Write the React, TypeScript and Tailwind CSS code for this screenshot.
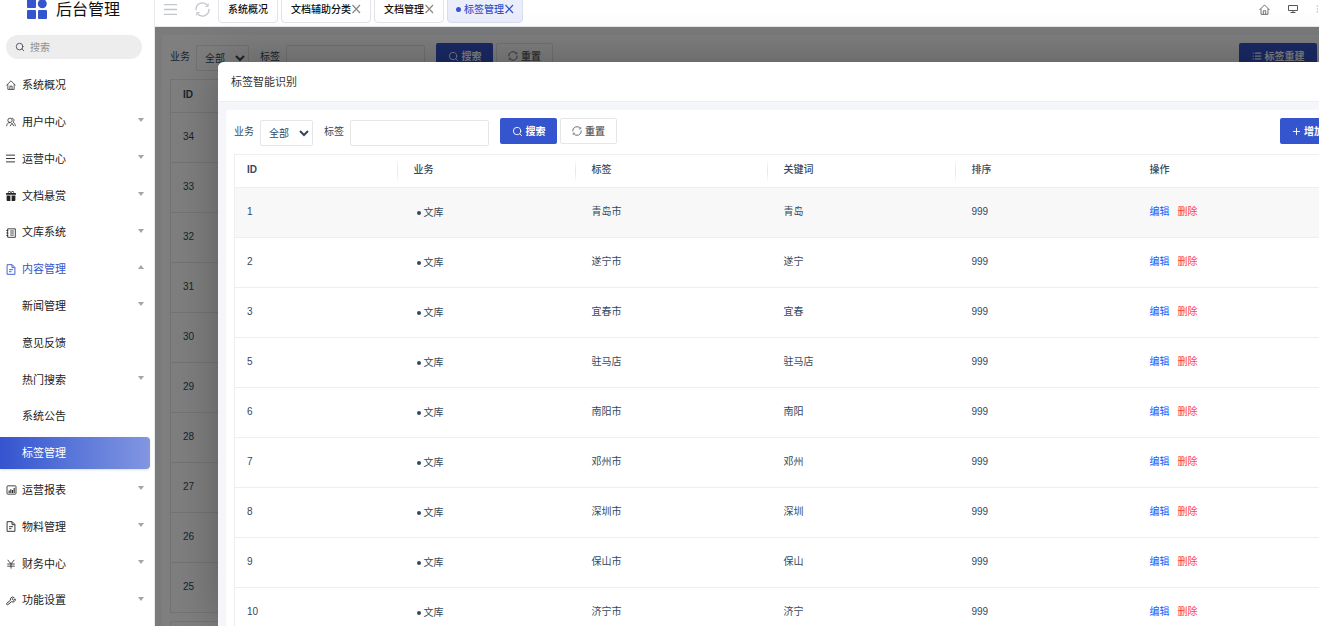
import React, { useState } from 'react';
import { BsGiftFill } from 'react-icons/bs';
import { Plus, Search, Wrench, List } from 'lucide-react';

interface MenuItem {
  label: string;
  icon?: React.ReactNode;
  arrow?: 'up' | 'down';
  highlight?: boolean;
}

interface TagRow {
  id: number;
  tag: string;
  keyword: string;
}

const HomeIcon: React.FC<{ size: number }> = ({ size }) => (
  <svg width={size} height={size} viewBox="0 0 12 12" fill="none" stroke="currentColor" strokeWidth="0.9">
    <path d="M0.5 6.5 6 1l5.5 5.5M2.2 5.2v6.1h7.6V5.2M4.7 11.3V7.4h2.6v3.9" />
  </svg>
);

const UserIcon = () => (
  <svg width="10" height="10" viewBox="0 0 12 12" fill="none" stroke="currentColor" strokeWidth="0.9">
    <circle cx="4.8" cy="4" r="2.6" />
    <path d="M0.8 11c0-2.6 1.7-4.4 4-4.4M7 1.5c2.6 0 3.4 3 1.4 4.5 1.6.8 2.6 2.5 2.8 5M5 11l2.2-3.6L9.3 11" />
  </svg>
);

const LinesIcon: React.FC<{ size: number }> = ({ size }) => (
  <svg width={size} height={size} viewBox="0 0 12 12" fill="none" stroke="currentColor" strokeWidth="1.2">
    <path d="M0 1.5h12M0 6h12M0 10.5h12" />
  </svg>
);

const NotebookIcon = () => (
  <svg width="10" height="10" viewBox="0 0 12 12" fill="none" stroke="currentColor">
    <path d="M2 1h9.2v10.2H2zM0.3 3h2.4M0.3 6h2.4M0.3 9h2.4M5 3.6h4.4M5 6h4.4M5 8.5h4.4" />
  </svg>
);

const FileIcon = () => (
  <svg width="10" height="11" viewBox="0 0 11 12" fill="none" stroke="currentColor">
    <path d="M1.2 0.7h5.6l3 3v7.6H1.2zM6.6 0.9V4h3M3.4 6.2h4.2M3.4 8.4h2.6" />
  </svg>
);

const ChartIcon = () => (
  <svg width="11" height="10" viewBox="0 0 12 12" fill="none" stroke="currentColor">
    <rect x="0.6" y="1" width="10.8" height="10" rx="1" />
    <path d="M3.2 9.5V6.5M5.2 9.5V5M7.2 9.5V6M9.2 9.5V3.5" strokeWidth="1.3" />
  </svg>
);

const YenIcon = () => (
  <svg width="10" height="10" viewBox="0 0 12 12" fill="none" stroke="currentColor">
    <path d="M2 1l4 4.8L10 1M6 5.8V11.5M1.5 6h9M1.5 8.6h9" />
  </svg>
);

const RefreshIcon: React.FC<{ size: number }> = ({ size }) => (
  <svg width={size} height={size} viewBox="0 0 14 14" fill="none" stroke="currentColor" strokeWidth="1.3">
    <path d="M1 7.6A6 6 0 0 1 11.8 3.4M13 6.4A6 6 0 0 1 2.2 10.6" />
    <path d="M12.3 1.2v2.9H9.6M1.7 12.8V9.9h2.7" strokeWidth="0.9" />
  </svg>
);

const ScreenIcon = () => (
  <svg width="10" height="10" viewBox="0 0 10 10" fill="none" stroke="currentColor">
    <path d="M0.5 1.5h9v5h-9zM5 6.5v2M2.5 8.5h5" />
  </svg>
);

const CloseIcon = () => (
  <svg width="10" height="10" viewBox="0 0 10 10" fill="none" stroke="currentColor" strokeWidth="1.2">
    <path d="M1.5 1l7.5 8M9 1L1.5 9" />
  </svg>
);

const menu: MenuItem[] = [
  { label: '系统概况', icon: <HomeIcon size={10} /> },
  { label: '用户中心', icon: <UserIcon />, arrow: 'down' },
  { label: '运营中心', icon: <LinesIcon size={9} />, arrow: 'down' },
  { label: '文档悬赏', icon: <BsGiftFill size={10} />, arrow: 'down' },
  { label: '文库系统', icon: <NotebookIcon />, arrow: 'down' },
  { label: '内容管理', icon: <FileIcon />, arrow: 'up', highlight: true },
  { label: '新闻管理', arrow: 'down' },
  { label: '意见反馈' },
  { label: '热门搜索', arrow: 'down' },
  { label: '系统公告' },
  { label: '标签管理' },
  { label: '运营报表', icon: <ChartIcon />, arrow: 'down' },
  { label: '物料管理', icon: <FileIcon />, arrow: 'down' },
  { label: '财务中心', icon: <YenIcon />, arrow: 'down' },
  { label: '功能设置', icon: <Wrench size={10} strokeWidth={2} className="rotate-6" />, arrow: 'down' },
];

const tabs = [
  { label: '系统概况', closable: false },
  { label: '文档辅助分类', closable: true },
  { label: '文档管理', closable: true },
  { label: '标签管理', closable: true },
];

const pageIds = [34, 33, 32, 31, 30, 29, 28, 27, 26, 25];

const rows: TagRow[] = [
  { id: 1, tag: '青岛市', keyword: '青岛' },
  { id: 2, tag: '遂宁市', keyword: '遂宁' },
  { id: 3, tag: '宜春市', keyword: '宜春' },
  { id: 5, tag: '驻马店', keyword: '驻马店' },
  { id: 6, tag: '南阳市', keyword: '南阳' },
  { id: 7, tag: '邓州市', keyword: '邓州' },
  { id: 8, tag: '深圳市', keyword: '深圳' },
  { id: 9, tag: '保山市', keyword: '保山' },
  { id: 10, tag: '济宁市', keyword: '济宁' },
];

const Caret: React.FC<{ dir: 'up' | 'down' }> = ({ dir }) => (
  <svg width="6" height="4" viewBox="0 0 6 4" className="mb-1 text-[#a3a5a8]" fill="currentColor">
    <path d={dir === 'down' ? 'M0 0h6L3 4z' : 'M0 4h6L3 0z'} />
  </svg>
);

const Sidebar = () => {
  const [active, setActive] = useState('标签管理');

  return (
    <aside className="flex w-[155px] shrink-0 flex-col border-r border-[#e8e8e8] bg-white">
      <div className="flex h-[27px] items-end gap-[9px] overflow-hidden pb-2 pl-[27px]">
        <svg width="20" height="20" viewBox="0 0 20 20" fill="#3455cd" className="shrink-0">
          <rect width="9" height="9" rx="1" />
          <circle cx="15.3" cy="4.7" r="4.5" />
          <rect y="11" width="9" height="9" rx="1" />
          <rect x="11" y="11" width="9" height="9" rx="1" />
        </svg>
        <span className="text-[16px] leading-[18px] text-[#111]">后台管理</span>
      </div>

      <label className="mt-2 mr-3 ml-[6px] flex h-6 items-center gap-[5px] rounded-full bg-[#ededed] pl-[9px] text-[#444]">
        <Search size={10} strokeWidth={2} className="shrink-0" />
        <input
          type="text"
          placeholder="搜索"
          aria-label="搜索"
          className="w-full min-w-0 bg-transparent text-[10px] outline-none placeholder:text-[#8f8f8f]"
        />
      </label>

      <nav className="mt-2 flex flex-1 flex-col pb-[7px]">
        {menu.map(item => {
          const isActive = item.label === active;
          return (
            <div key={item.label} className="flex min-h-9 flex-1 items-center pr-1">
              <button
                onClick={() => setActive(item.label)}
                className={
                  isActive
                    ? 'flex h-8 w-full items-center rounded-r bg-linear-to-r from-[#3554cf] to-[#8296e1] px-[6px] text-[11px] text-white shadow'
                    : item.highlight
                      ? 'flex h-8 w-full items-center px-[6px] text-[11px] text-[#3455cd]'
                      : 'flex h-8 w-full items-center px-[6px] text-[11px] text-[#222]'
                }
              >
                <span className="flex w-4 items-center">{item.icon}</span>
                <span className="flex-1 text-left">{item.label}</span>
                {item.arrow && <Caret dir={item.arrow} />}
              </button>
            </div>
          );
        })}
      </nav>
    </aside>
  );
};

const TopBar = () => {
  const [current, setCurrent] = useState('标签管理');

  return (
    <header className="flex h-[27px] shrink-0 items-end overflow-hidden border-b border-[#e8e8e8] bg-white pb-[3px] pl-[9px]">
      <div className="flex h-7 items-center gap-[18px] pr-2 text-[#c3c6cc]">
        <button aria-label="菜单"><LinesIcon size={13} /></button>
        <button aria-label="刷新"><RefreshIcon size={15} /></button>
      </div>
      <div className="flex flex-1 gap-[3px]">
        {tabs.map(tab => (
          <button
            key={tab.label}
            onClick={() => setCurrent(tab.label)}
            className={
              tab.label === current
                ? 'flex h-7 items-center rounded border border-[#d9def3] bg-[#ebeefa] px-2 text-[10px] font-medium text-[#3455cd]'
                : 'flex h-7 items-center rounded border border-[#e2e4ea] bg-white px-[9px] text-[10px] font-medium text-[#111]'
            }
          >
            {tab.label === current && <span className="mr-[3px] size-[5px] rounded-full bg-[#3455cd]" />}
            {tab.label}
            {tab.closable && (
              <span className={tab.label === current ? 'text-[#3455cd]' : 'text-[#888]'}>
                <CloseIcon />
              </span>
            )}
          </button>
        ))}
      </div>
      <div className="flex h-7 items-center gap-[18px] text-[#555]">
        <button aria-label="主页"><HomeIcon size={11} /></button>
        <button aria-label="全屏"><ScreenIcon /></button>
        <button aria-label="更多" className="pr-[6px]"><List size={10} /></button>
      </div>
    </header>
  );
};

const FilterBar: React.FC<{ name: string; action: React.ReactNode }> = ({ name, action }) => (
  <form className="flex items-start text-[10px] text-[#34495e]" onSubmit={e => e.preventDefault()}>
    <label htmlFor={`${name}-type`} className="w-[26px] leading-[28px]">业务</label>
    <select
      id={`${name}-type`}
      className="mt-[2px] h-[26px] w-[53px] rounded-xs border border-[#e6e6e6] pl-1 text-[#34495e]"
    >
      <option>全部</option>
    </select>
    <label htmlFor={`${name}-tag`} className="ml-[11px] w-[26px] leading-[28px]">标签</label>
    <input
      id={`${name}-tag`}
      type="text"
      className="mt-[2px] mr-[11px] h-[26px] w-[139px] rounded-xs border border-[#e6e6e6] px-2"
    />
    <button className="flex h-[26px] w-[57px] items-center justify-center gap-[3px] rounded-xs bg-[#3455cd] font-bold text-white">
      <Search size={11} strokeWidth={2} />
      搜索
    </button>
    <button
      type="reset"
      className="ml-[3px] flex h-[26px] w-[57px] items-center justify-center gap-[3px] rounded-xs border border-[#e6e6e6] font-bold text-[#666]"
    >
      <RefreshIcon size={10} />
      重置
    </button>
    <div className="ml-auto">{action}</div>
  </form>
);

const HeadCell: React.FC<{ children: React.ReactNode; divider?: boolean }> = ({ children, divider }) => (
  <th className="h-[33px] border-b border-[#eee] p-0 text-left font-medium">
    <div className="flex h-6 items-center">
      <span className="flex-1 pb-1 pl-4">{children}</span>
      {divider && <span className="h-6 w-px bg-linear-to-b from-white via-[#e4e4e4] to-white" />}
    </div>
  </th>
);

const TagPage = () => (
  <div className="flex-1 overflow-hidden bg-[#f4f6f9] px-[7px] pt-2">
    <div className="rounded-xs bg-white p-2">
      <FilterBar
        name="page"
        action={
          <button className="flex h-[26px] w-[78px] items-center justify-center gap-[3px] rounded-xs bg-[#3455cd] font-bold text-white">
            <List size={10} strokeWidth={3} />
            标签重建
          </button>
        }
      />
      <table className="mt-2 w-full table-fixed border border-[#e8e8e8] text-[10px] text-[#34495e]">
        <thead>
          <tr>
            <th className="h-[33px] border-b border-[#e8e8e8] pb-1 pl-3 text-left font-bold">ID</th>
          </tr>
        </thead>
        <tbody>
          {pageIds.map(id => (
            <tr key={id}>
              <td className="h-[50px] border-b border-[#e8e8e8] pt-0 pb-0.5 pl-3">{id}</td>
            </tr>
          ))}
        </tbody>
      </table>
      <div className="mt-2 h-8 rounded-xs border border-[#e8e8e8]" />
    </div>
  </div>
);

const TagDialog = () => (
  <div
    role="dialog"
    aria-labelledby="dialog-title"
    className="absolute top-[62px] -right-6 bottom-0 left-[63px] flex flex-col overflow-hidden rounded-tl-md bg-[#f4f6f9] shadow-[1px_1px_50px_rgba(0,0,0,0.3)]"
  >
    <h2 id="dialog-title" className="h-10 shrink-0 border-b border-[#eee] bg-white pl-[13px] text-[11px] leading-[40px] text-[#333]">
      标签智能识别
    </h2>
    <div className="mx-2 mt-2 flex-1 overflow-hidden rounded-xs bg-white p-2">
      <FilterBar
        name="dialog"
        action={
          <button className="flex h-[26px] w-[60px] items-center gap-[2px] rounded-xs bg-[#3455cd] pl-[11px] font-bold text-white">
            <Plus size={11} strokeWidth={2} />
            增加
          </button>
        }
      />
      <table className="mt-2 w-full table-fixed border border-[#eee] text-[10px] text-[#34495e]">
        <colgroup>
          <col className="w-[163px]" />
          <col className="w-[178px]" />
          <col className="w-[192px]" />
          <col className="w-[188px]" />
          <col className="w-[178px]" />
          <col />
        </colgroup>
        <thead>
          <tr>
            <th className="h-[33px] border-b border-[#eee] p-0 text-left font-bold">
              <div className="flex h-6 items-center">
                <span className="flex-1 pb-1 pl-3">ID</span>
                <span className="h-6 w-px bg-linear-to-b from-white via-[#e4e4e4] to-white" />
              </div>
            </th>
            <HeadCell divider>业务</HeadCell>
            <HeadCell divider>标签</HeadCell>
            <HeadCell divider>关键词</HeadCell>
            <HeadCell>排序</HeadCell>
            <HeadCell>操作</HeadCell>
          </tr>
        </thead>
        <tbody>
          {rows.map((row, i) => (
            <tr key={row.id} className={i === 0 ? 'bg-[#f8f8f8]' : 'hover:bg-[#f8f8f8]'}>
              <td className="h-[50px] border-b border-[#eee] pt-0 pb-0.5 pl-3">{row.id}</td>
              <td className="border-b border-[#eee] py-0 pl-[19px]">
                <span className="flex items-center gap-[3px]">
                  <span className="size-1 rounded-full bg-[#34495e]" />
                  文库
                </span>
              </td>
              <td className="border-b border-[#eee] pt-0 pb-0.5 pl-4">{row.tag}</td>
              <td className="border-b border-[#eee] pt-0 pb-0.5 pl-4">{row.keyword}</td>
              <td className="border-b border-[#eee] pt-0 pb-0.5 pl-4">999</td>
              <td className="border-b border-[#eee] pt-0 pb-0.5 pl-4">
                <a href="#edit" className="mr-2 text-[#0a5cff]">编辑</a>
                <a href="#delete" className="text-[#ff4433]">删除</a>
              </td>
            </tr>
          ))}
        </tbody>
      </table>
    </div>
  </div>
);

const App = () => {
  return (
    <div className="flex h-screen overflow-hidden bg-white font-['Liberation_Sans','Noto_Sans_CJK_SC',sans-serif]">
      <Sidebar />
      <main className="relative -mr-[13px] flex min-w-0 flex-1 flex-col">
        <TopBar />
        <TagPage />
        {/* Modal layer */}
        <div className="absolute inset-x-0 top-[27px] bottom-0 bg-black/50" />
        <TagDialog />
      </main>
    </div>
  );
};

export default App;
